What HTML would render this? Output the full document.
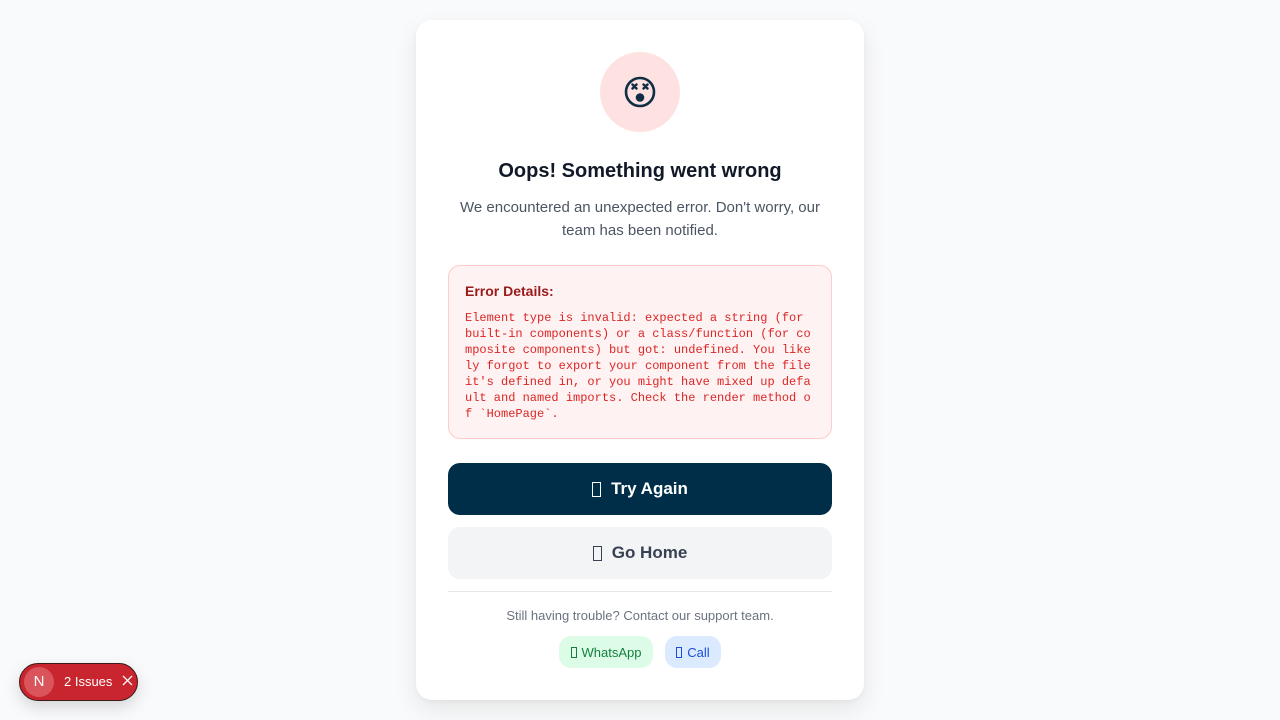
<!DOCTYPE html>
<html><head><meta charset="utf-8"><style>
*{box-sizing:border-box;margin:0;padding:0}
body{width:1280px;height:720px;background:#f9fafb;font-family:"Liberation Sans",sans-serif;position:relative;overflow:hidden}
.card{position:absolute;left:416px;top:20px;width:448px;height:680px;background:#fff;border-radius:16px;box-shadow:0 10px 25px rgba(0,0,0,0.08),0 2px 6px rgba(0,0,0,0.04)}
.ic{position:absolute;left:184px;top:32px;width:80px;height:80px;border-radius:50%;background:#fee2e2}
h1{position:absolute;left:0;width:448px;top:140px;text-align:center;font-size:20px;font-weight:bold;color:#111827}
.p{position:absolute;left:32px;width:384px;top:176px;text-align:center;font-size:15px;line-height:23px;color:#4b5563}
.err{position:absolute;left:32px;top:245px;width:384px;height:174px;background:#fef2f2;border:1px solid #fecaca;border-radius:12px;padding:17px 16px}
.err b{display:block;font-size:14px;color:#991b1b;margin-bottom:11px}
.err pre{font-family:"Liberation Mono",monospace;font-size:12px;line-height:16px;color:#dc2626;white-space:pre-wrap;word-break:break-all;width:346px}
.btn{position:absolute;left:32px;width:384px;height:52px;border-radius:12px;display:flex;align-items:center;justify-content:center;font-size:17px;font-weight:bold}
.box{display:inline-block;width:9px;height:15px;border:1.3px solid currentColor;margin-right:10px}
.b1{top:443px;background:#002e48;color:#fff}
.b2{top:507px;background:#f3f4f6;color:#374151}
.hr{position:absolute;left:32px;width:384px;top:571px;border-top:1px solid #e5e7eb}
.s{position:absolute;left:0;width:448px;top:588px;text-align:center;font-size:13px;color:#6b7280}
.pill{position:absolute;top:616px;height:32px;border-radius:12px;font-size:13px;display:flex;align-items:center;justify-content:center}
.pill .box{width:6px;height:11px;border-width:1px;margin-right:5px}
.wa{left:143px;width:94px;background:#dcfce7;color:#15803d}
.ca{left:249px;width:56px;background:#dbeafe;color:#1d4ed8}
.iss{position:absolute;left:19px;top:663px;width:119px;height:38px;border-radius:19px;background:#c9252e;border:1px solid #3a1a1a;box-shadow:0 6px 16px rgba(0,0,0,0.15);color:#fff}
.iss .n{position:absolute;left:4px;top:3px;width:30px;height:30px;border-radius:50%;background:#d9545b;text-align:center;line-height:30px;font-size:15px}
.iss .t{position:absolute;left:44px;top:10px;font-size:13px}
.iss .x{position:absolute;left:102px;top:11px}
</style></head><body>
<div class="card">
<div class="ic"><svg width="80" height="80" viewBox="0 0 80 80"><circle cx="40" cy="40" r="14" fill="none" stroke="#0f2d44" stroke-width="2.6"/><g stroke="#0f2d44" stroke-width="2.4" stroke-linecap="round"><path d="M32.5 32.5l4 4M36.5 32.5l-4 4M43.5 32.5l4 4M47.5 32.5l-4 4"/></g><circle cx="40" cy="45.5" r="4.3" fill="#0f2d44"/></svg></div>
<h1>Oops! Something went wrong</h1>
<div class="p">We encountered an unexpected error. Don't worry, our team has been notified.</div>
<div class="err"><b>Error Details:</b><pre>Element type is invalid: expected a string (for built-in components) or a class/function (for composite components) but got: undefined. You likely forgot to export your component from the file it's defined in, or you might have mixed up default and named imports. Check the render method of `HomePage`.</pre></div>
<div class="btn b1"><span class="box"></span>Try Again</div>
<div class="btn b2"><span class="box"></span>Go Home</div>
<div class="hr"></div>
<div class="s">Still having trouble? Contact our support team.</div>
<div class="pill wa"><span class="box"></span>WhatsApp</div>
<div class="pill ca"><span class="box"></span>Call</div>
</div>
<div class="iss"><div class="n">N</div><div class="t">2 Issues</div><svg class="x" width="11" height="11" viewBox="0 0 11 11"><path d="M1 1l9 9M10 1l-9 9" stroke="#fff" stroke-width="1.3"/></svg></div>
</body></html>
